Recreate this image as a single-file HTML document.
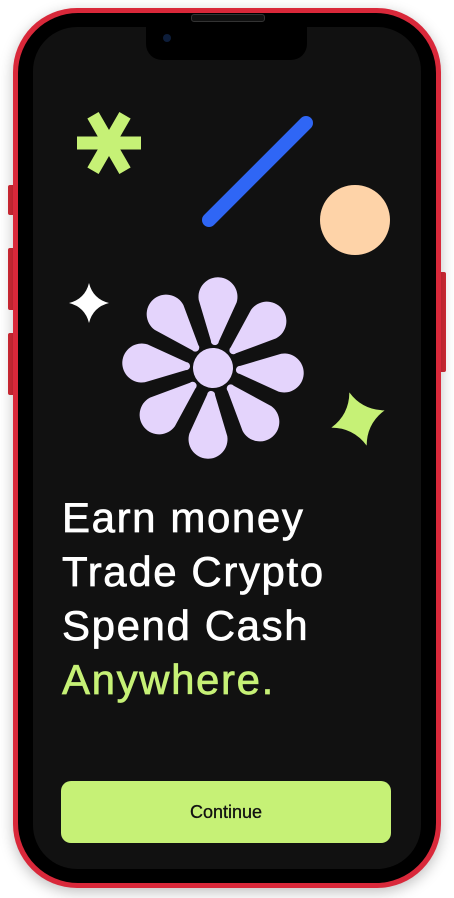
<!DOCTYPE html>
<html><head><style>
html,body{margin:0;padding:0;background:#fff;width:454px;height:898px;overflow:hidden;position:relative}
.abs{position:absolute}
.txt{position:absolute;left:62px;top:491px;font-family:"Liberation Sans",sans-serif;font-size:42px;line-height:54px;color:#fff;letter-spacing:1.6px;-webkit-text-stroke:0.7px currentColor}
</style></head><body>
<div class="abs" style="left:8px;top:185px;width:7px;height:30px;background:#d42a36;border-radius:2px"></div>
<div class="abs" style="left:8px;top:248px;width:7px;height:62px;background:#d42a36;border-radius:2px"></div>
<div class="abs" style="left:8px;top:333px;width:7px;height:62px;background:#d42a36;border-radius:2px"></div>
<div class="abs" style="left:439px;top:272px;width:7px;height:100px;background:#d42a36;border-radius:2px"></div>
<div class="abs" style="left:13px;top:8px;width:428px;height:880px;background:#d9283a;border-radius:64px;box-shadow:0 4px 14px rgba(0,0,0,0.25)"></div>
<div class="abs" style="left:18px;top:13px;width:418px;height:870px;background:#000;border-radius:60px"></div>
<div class="abs" style="left:33px;top:27px;width:388px;height:842px;background:#111;border-radius:44px"></div>
<div class="abs" style="left:146px;top:20px;width:161px;height:40px;background:#000;border-radius:0 0 16px 16px"></div>
<div class="abs" style="left:191px;top:14px;width:72px;height:6px;background:#111;border-radius:3px;border:1px solid #333"></div>
<div class="abs" style="left:163px;top:34px;width:8px;height:8px;background:#0d1d3a;border-radius:50%"></div>
<svg class="abs" style="left:0;top:0" width="454" height="898" viewBox="0 0 454 898">
  <g transform="translate(109,143)" fill="#c6f176">
    <rect x="-32" y="-6.5" width="64" height="13"/>
    <rect x="-32" y="-6.5" width="64" height="13" transform="rotate(60)"/>
    <rect x="-32" y="-6.5" width="64" height="13" transform="rotate(120)"/>
  </g>
  <line x1="209" y1="220" x2="306" y2="123" stroke="#2f66f5" stroke-width="14" stroke-linecap="round"/>
  <circle cx="355" cy="220" r="35" fill="#fed3a8"/>
  <path d="M89 283 Q93 299 109 303 Q93 307 89 323 Q85 307 69 303 Q85 299 89 283Z" fill="#fff"/>
  <g transform="translate(358,419) rotate(-18)">
    <path d="M0 -28 Q7 -7 28 0 Q7 7 0 28 Q-7 7 -28 0 Q-7 -7 0 -28Z" fill="#c6f176"/>
  </g>
  <g transform="translate(213,368) rotate(4)" fill="#e4d4fc">
    <circle r="20"/>
    <g id="p"><path d="M-4 -27 L-19 -67 A19.5 19.5 0 1 1 19 -67 L4 -27 A4 4 0 0 1 -4 -27Z"/></g>
    <use href="#p" transform="rotate(45)"/>
    <use href="#p" transform="rotate(90)"/>
    <use href="#p" transform="rotate(135)"/>
    <use href="#p" transform="rotate(180)"/>
    <use href="#p" transform="rotate(225)"/>
    <use href="#p" transform="rotate(270)"/>
    <use href="#p" transform="rotate(315)"/>
  </g>
</svg>
<div class="txt">Earn money<br>Trade Crypto<br>Spend Cash<br><span style="color:#c6f176">Anywhere.</span></div>
<div class="abs" style="left:61px;top:781px;width:330px;height:62px;background:#c6f176;border-radius:10px;font-family:'Liberation Sans',sans-serif;font-size:18px;line-height:62px;text-align:center;color:#111;-webkit-text-stroke:0.3px #111">Continue</div>
</body></html>
